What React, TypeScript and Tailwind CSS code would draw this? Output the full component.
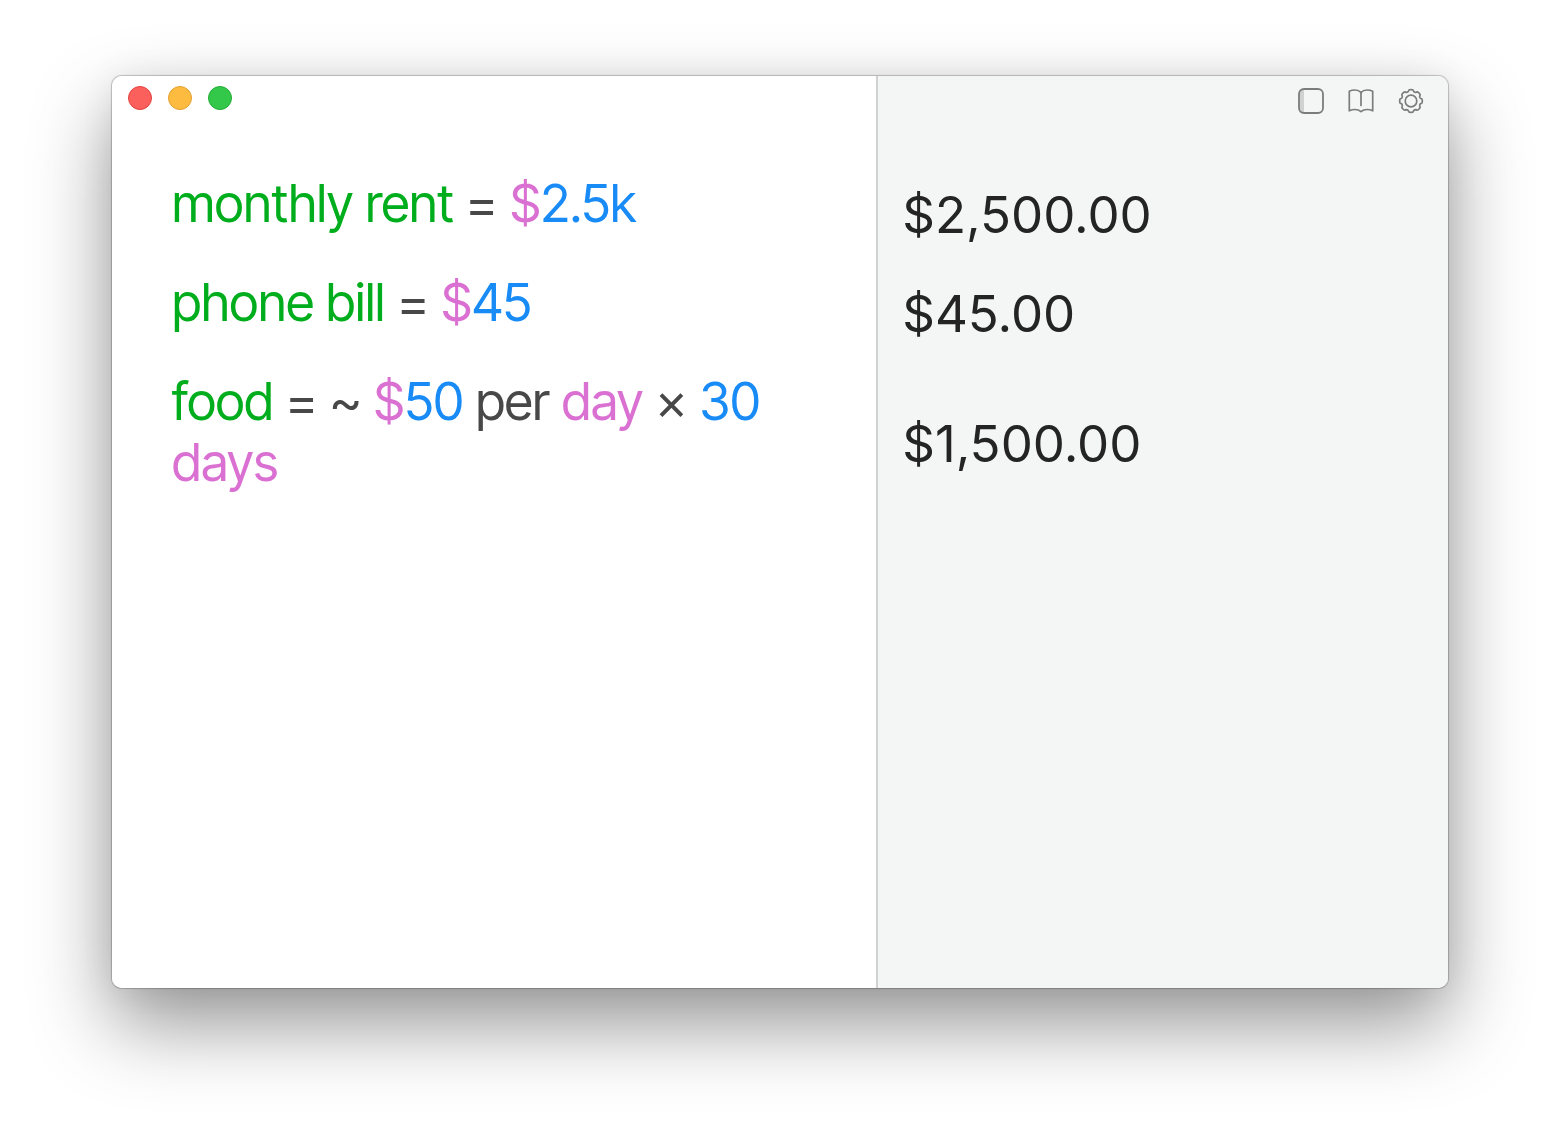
import React from "react";

type Token = { text: string; kind: "name" | "unit" | "number" | "plain" };

const tokenColors = {
  name: "text-[#00ad1c]",
  unit: "text-[#da70d2]",
  number: "text-[#188bf7]",
  plain: "text-[#484848]",
};

const lines: { tokens: Token[]; answer: string }[] = [
  {
    tokens: [
      { text: "monthly rent", kind: "name" },
      { text: " = ", kind: "plain" },
      { text: "$", kind: "unit" },
      { text: "2.5k", kind: "number" },
    ],
    answer: "$2,500.00",
  },
  {
    tokens: [
      { text: "phone bill", kind: "name" },
      { text: " = ", kind: "plain" },
      { text: "$", kind: "unit" },
      { text: "45", kind: "number" },
    ],
    answer: "$45.00",
  },
  {
    tokens: [
      { text: "food", kind: "name" },
      { text: " = ~ ", kind: "plain" },
      { text: "$", kind: "unit" },
      { text: "50", kind: "number" },
      { text: " per ", kind: "plain" },
      { text: "day", kind: "unit" },
      { text: " × ", kind: "plain" },
      { text: "30", kind: "number" },
      { text: " ", kind: "plain" },
      { text: "days", kind: "unit" },
    ],
    answer: "$1,500.00",
  },
];

function SidebarIcon() {
  return (
    <svg viewBox="0 0 26 26" className="size-[26px]" fill="none" stroke="#7b7d7c" strokeWidth="1.8">
      <path d="M5 1h1v24H5a4 4 0 0 1-4-4V5a4 4 0 0 1 4-4z" fill="#d0d2d1" stroke="none" />
      <rect x="1" y="1" width="24" height="24" rx="5" />
    </svg>
  );
}

function BookIcon() {
  return (
    <svg viewBox="0 0 26 26" className="size-[26px]" fill="none" stroke="#7b7d7c" strokeWidth="1.7" strokeLinejoin="round" strokeLinecap="round">
      <path d="M13 4.5C11.5 2.8 9.500 2 7 2S3 2.400 1.300 3.200v19.600C3 22 4.800 21.500 7 21.500s4.500.8 6 2.200c1.500-1.400 3.800-2.200 6-2.200s4 .5 5.700 1.300V3.200C23 2.400 21.500 2 19 2s-4.500.8-6 2.500z" />
      <path d="M13 4.500v13" />
    </svg>
  );
}

function GearIcon() {
  // eight rounded teeth around the hub
  const points = Array.from({ length: 128 }, (_, i) => {
    const a = (i / 128) * Math.PI * 2;
    const wave = Math.tanh((Math.cos(a * 8) + 0.35) * 2.2);
    const r = 10.4 + wave * 0.9;
    return `${(13 + r * Math.cos(a)).toFixed(2)},${(13 + r * Math.sin(a)).toFixed(2)}`;
  }).join(" ");
  return (
    <svg viewBox="0 0 26 26" className="size-[26px]" fill="none" stroke="#7b7d7c" strokeWidth="1.7" strokeLinejoin="round">
      <polygon points={points} />
      <circle cx="13" cy="13" r="5.800" />
    </svg>
  );
}

export default function App() {
  return (
    <main className="flex min-h-screen bg-white px-28 pt-[76px] pb-[148px] leading-[61px]">
      <div className="grid flex-1 grid-cols-[57.2%_1fr] grid-rows-[auto_auto_auto_auto_1fr] gap-y-[38px] overflow-hidden rounded-[10px] shadow-[0_0_1px_1px_rgba(0,0,0,0.22),0_36px_80px_rgba(0,0,0,0.42),0_0_36px_rgba(0,0,0,0.06)]">
        <section className="row-span-5 grid grid-rows-subgrid bg-white font-['Inter_Tight','Inter',sans-serif] text-[52px]" aria-label="Notes">
          <div className="flex h-[59px] items-start gap-4 px-4 pt-2.5">
            <button aria-label="Close" className="size-6 rounded-full border border-[#e2443f] bg-[#fc605c]" />
            <button aria-label="Minimize" className="size-6 rounded-full border border-[#dfa032] bg-[#fdbc40]" />
            <button aria-label="Zoom" className="size-6 rounded-full border border-[#24ac37] bg-[#34c84a]" />
          </div>
          {lines.map((line) => (
            <p key={line.answer} className="pr-24 pl-[60px]">
              {line.tokens.map((token, i) => (
                <span key={i} className={tokenColors[token.kind]}>{token.text}</span>
              ))}
            </p>
          ))}
        </section>

        <section className="row-span-5 grid grid-rows-subgrid border-l-2 border-[#d0d2d1] bg-[#f4f6f5] font-['Inter',sans-serif] text-[51px]" aria-label="Answers">
          <div className="flex h-[59px] items-start justify-end gap-6 px-6 pt-3">
            <button aria-label="Toggle sidebar"><SidebarIcon /></button>
            <button aria-label="Documentation"><BookIcon /></button>
            <button aria-label="Settings"><GearIcon /></button>
          </div>
          {lines.map((line) => (
            <output key={line.answer} className="self-center pt-[22px] pl-6 leading-[39px] text-[#242424]">
              {line.answer}
            </output>
          ))}
        </section>
      </div>
    </main>
  );
}
